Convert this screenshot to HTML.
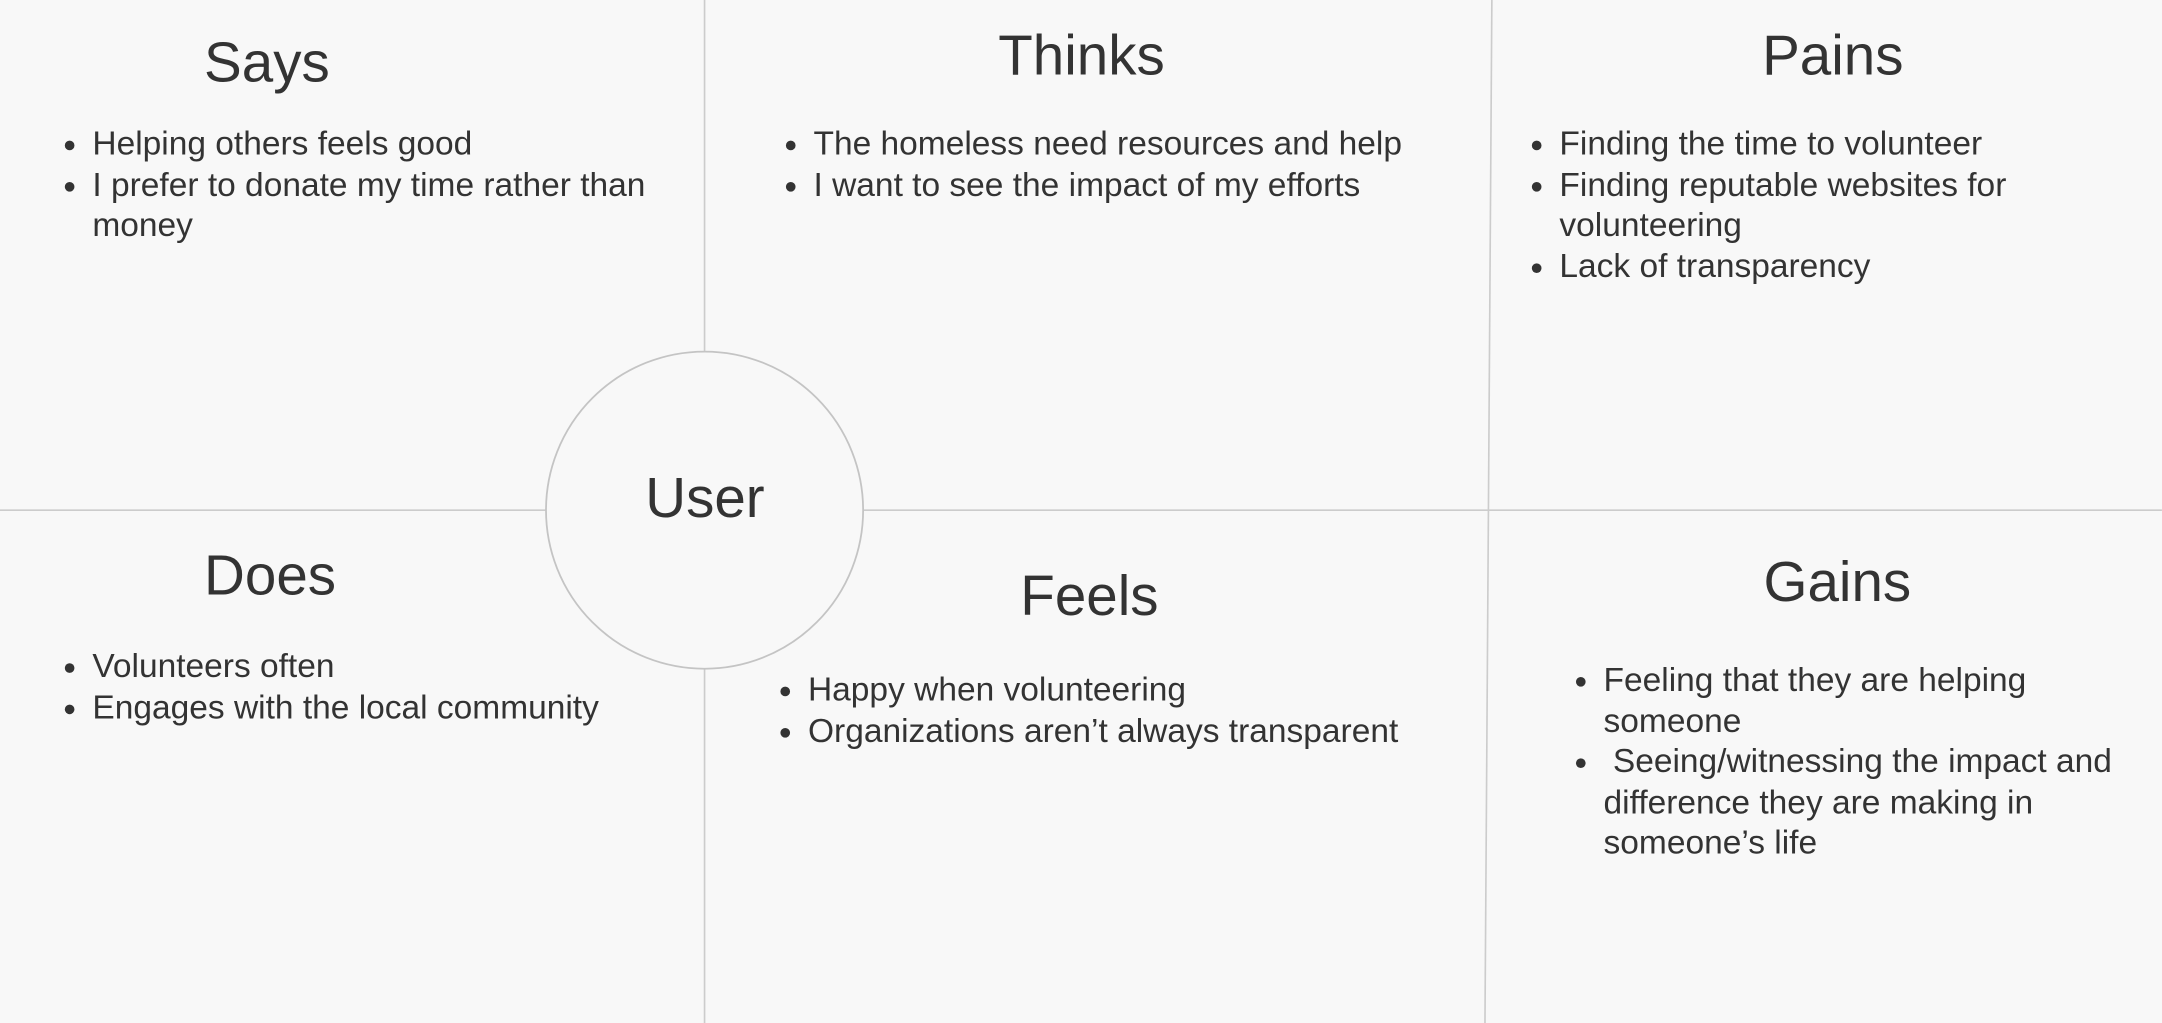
<!DOCTYPE html>
<html><head><meta charset="utf-8"><style>
html,body{margin:0;padding:0;background:#f8f8f8;overflow:hidden}
#w{position:absolute;left:0;top:0;width:1568px;height:742px;transform:scale(1.3788);transform-origin:0 0;font-family:"Liberation Sans",sans-serif;color:#333}
.t{position:absolute;font-size:41px;line-height:44px;white-space:nowrap}
.l{position:absolute;font-size:24.3px;line-height:29.6px;white-space:nowrap}
.l div{position:relative}
.l div.b::before{content:"";position:absolute;left:-20px;top:12px;width:7px;height:7px;border-radius:50%;background:#333}
</style></head><body><div id="w">
<svg width="1568" height="742" style="position:absolute;left:0;top:0">
<line x1="511" y1="0" x2="511" y2="255" stroke="#ccc" stroke-width="1.2"/>
<line x1="511" y1="485" x2="511" y2="742" stroke="#ccc" stroke-width="1.2"/>
<line x1="1082" y1="0" x2="1077" y2="742" stroke="#ccc" stroke-width="1.2"/>
<line x1="0" y1="370" x2="396" y2="370" stroke="#ccc" stroke-width="1.2"/>
<line x1="626" y1="370" x2="1568" y2="370" stroke="#ccc" stroke-width="1.2"/>
<circle cx="511" cy="370" r="115" fill="none" stroke="#c4c4c4" stroke-width="1.3"/>
</svg>
<div class="t" style="left:148px;top:23px">Says</div>
<div class="t" style="left:724px;top:18px">Thinks</div>
<div class="t" style="left:1278px;top:18px">Pains</div>
<div class="t" style="left:468px;top:339px">User</div>
<div class="t" style="left:148px;top:395px">Does</div>
<div class="t" style="left:740px;top:410px">Feels</div>
<div class="t" style="left:1279px;top:400px">Gains</div>

<div class="l" style="left:67px;top:90px"><div class="b">Helping others feels good</div><div class="b">I prefer to donate my time rather than</div><div>money</div></div>
<div class="l" style="left:590px;top:90px"><div class="b">The homeless need resources and help</div><div class="b">I want to see the impact of my efforts</div></div>
<div class="l" style="left:1131px;top:90px"><div class="b">Finding the time to volunteer</div><div class="b">Finding reputable websites for</div><div>volunteering</div><div class="b">Lack of transparency</div></div>
<div class="l" style="left:67px;top:469px"><div class="b">Volunteers often</div><div class="b">Engages with the local community</div></div>
<div class="l" style="left:586px;top:486px"><div class="b">Happy when volunteering</div><div class="b">Organizations aren’t always transparent</div></div>
<div class="l" style="left:1163px;top:479px"><div class="b">Feeling that they are helping</div><div>someone</div><div class="b">&nbsp;Seeing/witnessing the impact and</div><div>difference they are making in</div><div>someone’s life</div></div>
</div></body></html>
